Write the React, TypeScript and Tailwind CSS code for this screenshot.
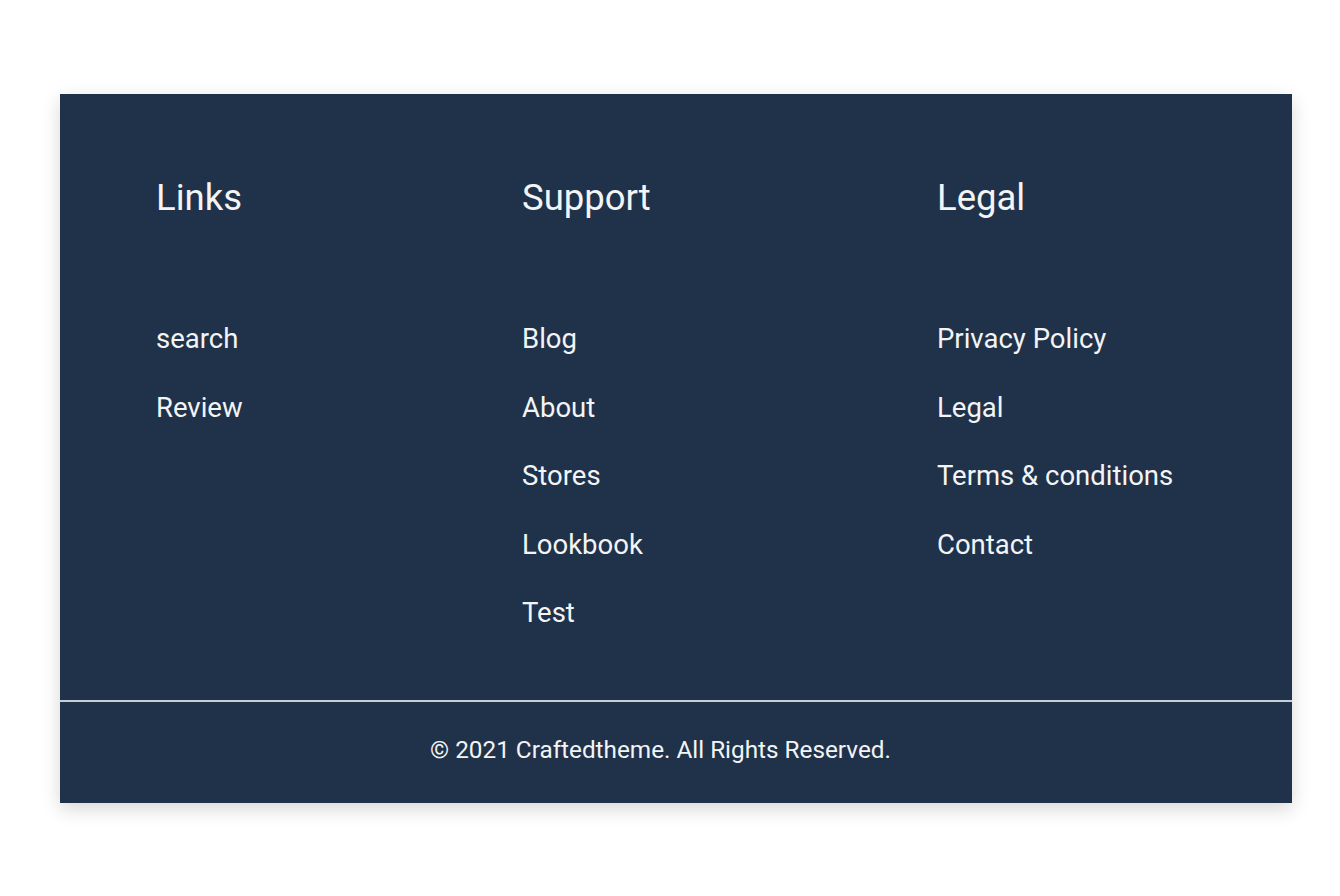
const columns = [
  { title: "Links", width: "w-[366px]", items: ["search", "Review"] },
  { title: "Support", width: "w-[415px]", items: ["Blog", "About", "Stores", "Lookbook", "Test"] },
  { title: "Legal", width: "", items: ["Privacy Policy", "Legal", "Terms & conditions", "Contact"] },
];

export default function App() {
  return (
    <div className="min-h-screen bg-white pl-[60px] pr-[48px] pt-[94px] font-['Roboto',sans-serif]">
      <footer className="bg-[#203249] text-[#f3f4f6] shadow-[0_6px_18px_rgba(0,0,0,0.16)]">
        <div className="flex pl-[96px] pt-[81px] pb-[67px]">
          {columns.map((col) => (
            <div key={col.title} className={col.width}>
              <h4 className="text-[36.5px] leading-[46px] font-normal">{col.title}</h4>
              <ul className="mt-[98px] flex flex-col gap-[28.5px]">
                {col.items.map((item) => (
                  <li key={item}>
                    <a href="#" className="text-[27.5px] leading-[40px]">
                      {item}
                    </a>
                  </li>
                ))}
              </ul>
            </div>
          ))}
        </div>
        <div className="border-t-2 border-[#c9ced6] pt-[30px] pb-[35px] pr-[31px] text-center">
          <p className="text-[24.3px] leading-[36px]">© 2021 Craftedtheme. All Rights Reserved.</p>
        </div>
      </footer>
    </div>
  );
}
